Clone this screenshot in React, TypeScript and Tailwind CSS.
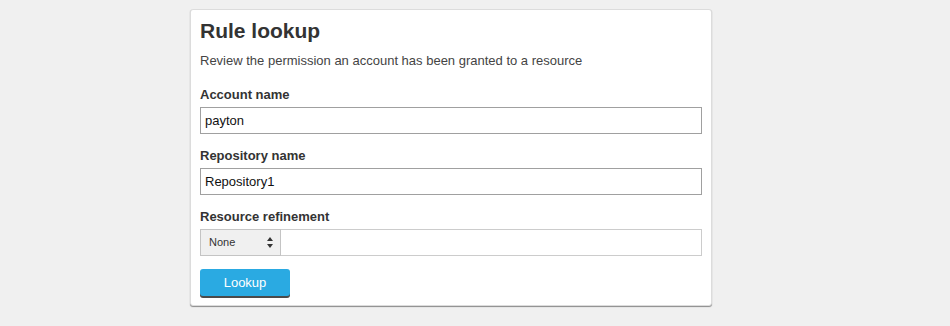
import React from 'react';

const font = { fontFamily: '"Liberation Sans", Arial, sans-serif' };

function Field({ label, value, className }: { label: string; value: string; className: string }) {
  return (
    <div className={`flex flex-col gap-[3px] ${className}`}>
      <label className="text-[13px] leading-[18px] font-bold text-[#333]">{label}</label>
      <input
        readOnly
        value={value}
        className="h-[27px] w-full border border-[#a0a0a0] bg-white px-[4px] text-[13px] text-[#111] outline-none"
      />
    </div>
  );
}

export default function App() {
  return (
    <div className="h-[326px] w-full bg-[#f0f0f0] pl-[190px] pt-[9px]" style={font}>
      <div className="flex w-[522px] flex-col items-start rounded-[3px] border border-[#dcdcdc] bg-white px-[9px] pb-[9px] pt-[9px] shadow-[0_1px_1px_#8a8a8a]">
        {/* Header */}
        <h1 className="text-[21px] leading-[24px] font-bold text-[#333]">Rule lookup</h1>
        <p className="mt-[9px] text-[13px] leading-[18px] text-[#444]">
          Review the permission an account has been granted to a resource
        </p>

        <Field label="Account name" value="payton" className="mt-[16px] w-full" />
        <Field label="Repository name" value="Repository1" className="mt-[13px] w-full" />

        {/* Resource refinement */}
        <div className="mt-[13px] flex w-full flex-col gap-[3px]">
          <label className="text-[13px] leading-[18px] font-bold text-[#333]">Resource refinement</label>
          <div className="flex h-[27px]">
            <div className="flex w-[81px] items-center justify-between border border-[#c4c4c4] bg-[#f0f0f0] pl-[8px] pr-[7px]">
              <span className="text-[11px] text-[#333]">None</span>
              <svg width="6" height="11" viewBox="0 0 6 11" className="text-[#333]">
                <path d="M3 0 L6 4 L0 4 Z" fill="currentColor" />
                <path d="M3 11 L6 7 L0 7 Z" fill="currentColor" />
              </svg>
            </div>
            <div className="flex-1 border border-l-0 border-[#cccccc] bg-white" />
          </div>
        </div>

        <button className="mt-[13px] h-[27px] w-[90px] rounded-[3px] bg-[#2aaae2] text-[13px] text-white shadow-[0_2px_0_#4a4a4a]">
          Lookup
        </button>
      </div>
    </div>
  );
}
